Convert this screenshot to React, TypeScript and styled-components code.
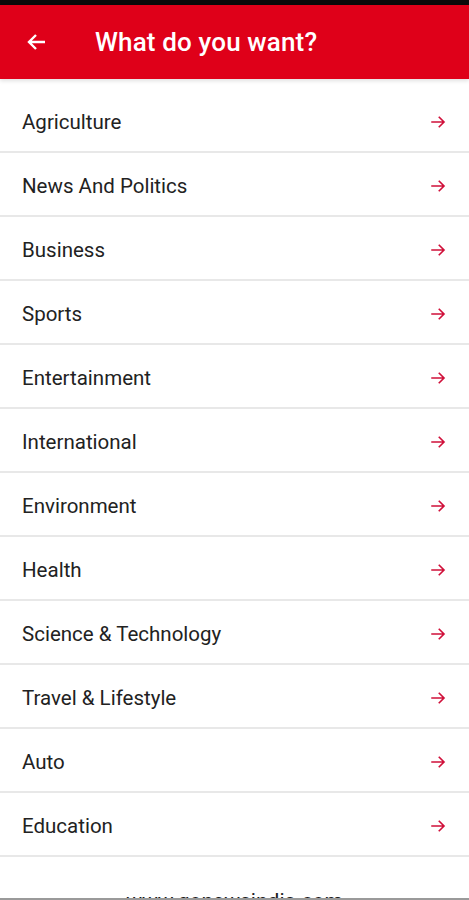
import React from 'react';
import styled, { createGlobalStyle } from 'styled-components';

const categories = [
  'Agriculture',
  'News And Politics',
  'Business',
  'Sports',
  'Entertainment',
  'International',
  'Environment',
  'Health',
  'Science & Technology',
  'Travel & Lifestyle',
  'Auto',
  'Education',
];

const BackArrow = () => (
  <svg width="24" height="24" viewBox="0 0 24 24" fill="none">
    <path d="M20 12H5M11 5l-7 7 7 7" stroke="#fff" strokeWidth="2.4" />
  </svg>
);

const RowArrow = () => (
  <svg width="18" height="18" viewBox="0 0 24 24" fill="none">
    <path d="M3 12h17M13 5l7 7-7 7" stroke="#d0103a" strokeWidth="2.2" />
  </svg>
);

const App = () => {
  return (
    <>
      <GlobalStyle />
      <Screen>
        <StatusBar />
        <Header>
          <BackButton>
            <BackArrow />
          </BackButton>
          <Title>What do you want?</Title>
        </Header>
        <List>
          {categories.map((name) => (
            <Row key={name}>
              <Label>{name}</Label>
              <RowArrow />
            </Row>
          ))}
        </List>
        <Footer>www.gonewsindia.com</Footer>
      </Screen>
    </>
  );
};

export default App;

const GlobalStyle = createGlobalStyle`
  html, body {
    margin: 0;
    padding: 0;
    background: #fff;
  }
  body {
    font-family: Roboto, 'Noto Sans', sans-serif;
  }
`;

const Screen = styled.div`
  width: 469px;
  height: 900px;
  overflow: hidden;
  display: flex;
  flex-direction: column;
  background: #fff;
  border-bottom: 2px solid #9a9a9a;
  box-sizing: border-box;
`;

const StatusBar = styled.div`
  height: 5px;
  background: #0a0a0a;
  flex-shrink: 0;
`;

const Header = styled.header`
  height: 74px;
  flex-shrink: 0;
  display: flex;
  align-items: center;
  background: #df0019;
  box-shadow: 0 2px 4px rgba(0, 0, 0, 0.12);
`;

const BackButton = styled.div`
  width: 24px;
  height: 24px;
  margin-left: 25px;
  display: flex;
  align-items: center;
`;

const Title = styled.h1`
  margin: 0 0 0 46px;
  color: #fff;
  font-size: 26px;
  font-weight: 500;
  letter-spacing: 0.15px;
`;

const List = styled.div`
  padding-top: 10px;
  display: flex;
  flex-direction: column;
  flex-shrink: 0;
`;

const Row = styled.div`
  box-sizing: border-box;
  height: 64px;
  display: flex;
  align-items: center;
  justify-content: space-between;
  padding: 4px 22px 0 22px;
  border-bottom: 2px solid #e8e8e8;
`;

const Label = styled.span`
  font-size: 20.5px;
  color: #222;
`;

const Footer = styled.div`
  margin-top: 31px;
  text-align: center;
  font-size: 21px;
  line-height: 26px;
  color: #1a1a1a;
  flex-shrink: 0;
`;
